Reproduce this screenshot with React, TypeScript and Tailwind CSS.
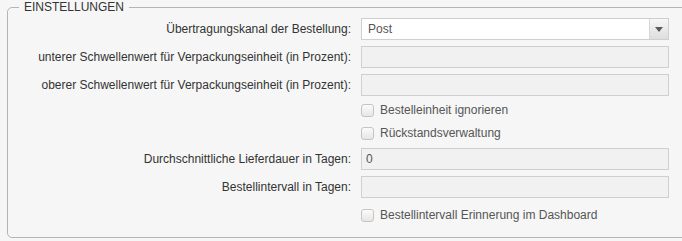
import React from 'react'

const font = { fontFamily: '"Liberation Sans", Arial, sans-serif' }

const Label = ({ text }: { text: string }) => (
    <div className="w-[343px] shrink-0 text-right text-[12px] leading-[22px] text-[#333]">{text}</div>
)

const TextInput = ({ value = '' }: { value?: string }) => (
    <div className="ml-[10px] h-[22px] w-[308px] border border-[#cfcfcf] bg-[#f1f1f1] px-[4px] text-[12px] leading-[20px] text-[#555]">
        {value}
    </div>
)

const Check = ({ text }: { text: string }) => (
    <div className="flex h-[20px] items-center pl-[353px]">
        <div className="h-[13px] w-[13px] rounded-[3px] border border-[#c4c4c4] bg-gradient-to-b from-[#fbfbfb] to-[#e6e6e6]" />
        <span className="ml-[6px] text-[12px] text-[#555]">{text}</span>
    </div>
)

export default function App() {
    return (
        <div className="h-[241px] w-[682px] overflow-hidden bg-[#f6f6f6]" style={font}>
            <fieldset className="ml-[7px] w-[700px] rounded-[5px] border border-[#b4b4b4] pb-[12px]">
                <legend className="ml-[11px] px-[5px] text-[12px] leading-[14px] text-[#333]">EINSTELLUNGEN</legend>

                {/* Übertragungskanal */}
                <div className="mt-[4px] flex">
                    <Label text="Übertragungskanal der Bestellung:" />
                    <div className="ml-[10px] flex h-[22px] w-[308px] border border-[#cfcfcf] bg-white">
                        <div className="flex-1 px-[6px] text-[12px] leading-[20px] text-[#555]">Post</div>
                        <div className="flex w-[19px] items-center justify-center border-l border-[#d6d6d6] bg-gradient-to-b from-[#f6f6f6] to-[#dedede]">
                            <svg width="8" height="5" viewBox="0 0 8 5">
                                <path d="M0 0h8L4 5z" fill="#5a5a5a" />
                            </svg>
                        </div>
                    </div>
                </div>

                <div className="mt-[6px] flex">
                    <Label text="unterer Schwellenwert für Verpackungseinheit (in Prozent):" />
                    <TextInput />
                </div>

                <div className="mt-[6px] flex">
                    <Label text="oberer Schwellenwert für Verpackungseinheit (in Prozent):" />
                    <TextInput />
                </div>

                <div className="mt-[4px]">
                    <Check text="Bestelleinheit ignorieren" />
                </div>
                <div className="mt-[3px]">
                    <Check text="Rückstandsverwaltung" />
                </div>

                <div className="mt-[5px] flex">
                    <Label text="Durchschnittliche Lieferdauer in Tagen:" />
                    <TextInput value="0" />
                </div>

                <div className="mt-[6px] flex">
                    <Label text="Bestellintervall in Tagen:" />
                    <TextInput />
                </div>

                <div className="mt-[7px]">
                    <Check text="Bestellintervall Erinnerung im Dashboard" />
                </div>
            </fieldset>
        </div>
    )
}
